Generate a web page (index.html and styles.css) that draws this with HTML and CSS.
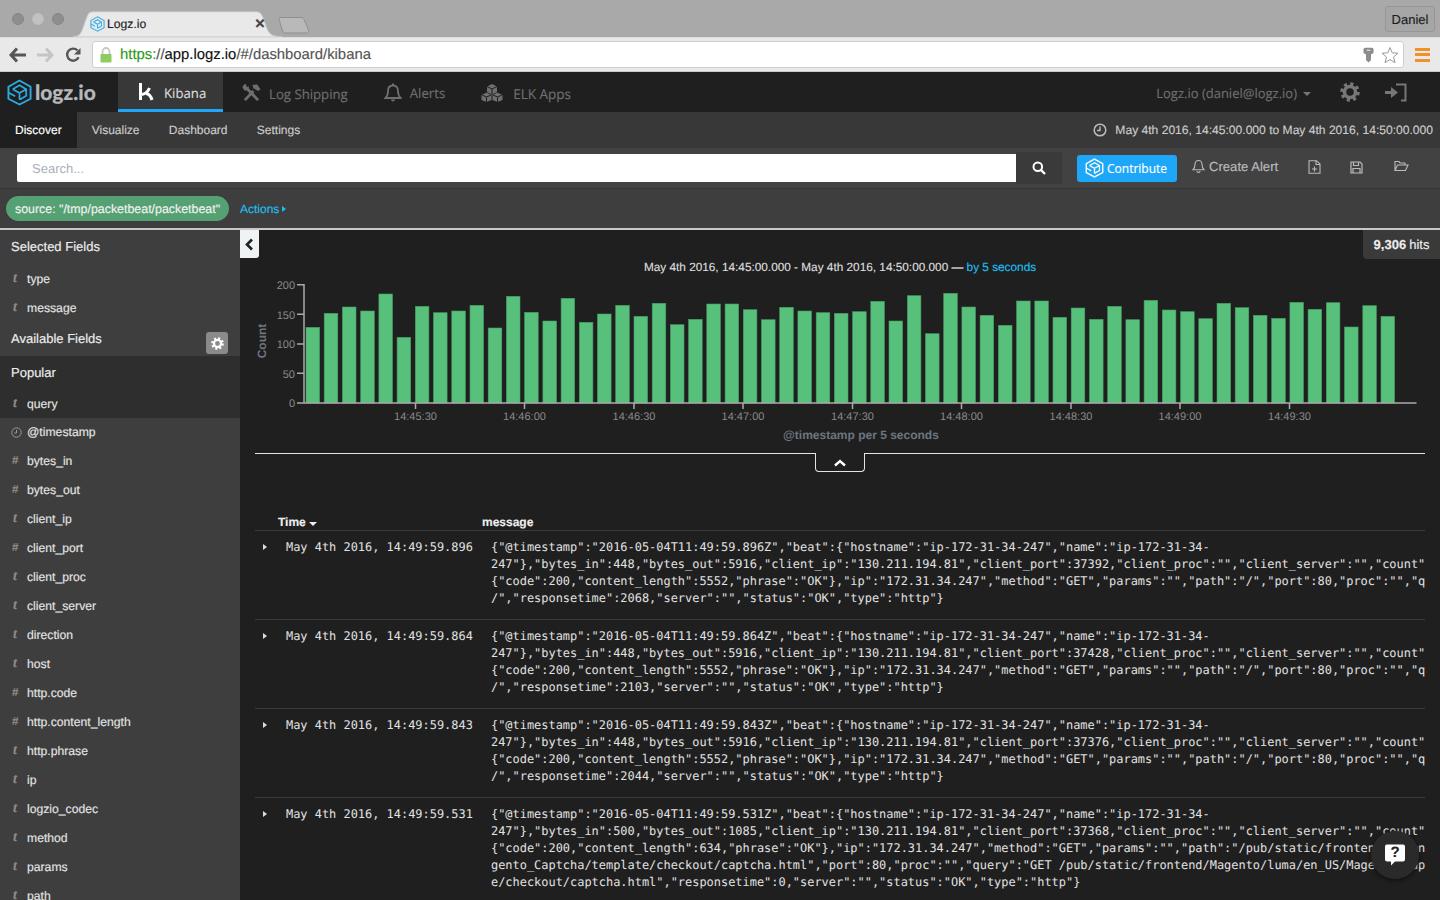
FILE: index.html
```html
<!DOCTYPE html>
<html lang="en">
<head>
<meta charset="utf-8">
<title>Logz.io</title>
<link rel="stylesheet" href="styles.css">
</head>
<body>
<svg class="defs" width="0" height="0" aria-hidden="true">
  <symbol id="logo" viewBox="0 0 26 28">
    <path d="M13 1.500 24.500 8v12.500L13 26.500 1.500 20.500V8z" fill="none" stroke="currentColor" stroke-width="2"/>
    <path d="M6 10.500 13 6.500l7 4v7l-7 4M6 10.500l7 4 7-4M13 14.500v7M1.500 14l7 4" fill="none" stroke="currentColor" stroke-width="1.800"/>
  </symbol>
</svg>

<div class="chrome-tabs">
  <div class="lights"><i class="light"></i><i class="light pale"></i><i class="light"></i></div>
  <div class="tab">
    <svg class="tab-shape" width="209" height="26" viewBox="0 0 212 26" preserveAspectRatio="none"><path d="M0 25.500C6 25.500 8 23 10 17L14 6C15.500 2 17 .7 21 .7H185C189 .7 191 2 192.500 6L197 18C199 23 202 25.500 212 25.500V26H0z" fill="#e9e9e9" stroke="#c4c4c4"/></svg>
    <svg class="favicon" width="15" height="16"><use href="#logo"/></svg>
    <span class="tab-title">Logz.io</span>
    <span class="tab-close">×</span>
  </div>
  <svg class="new-tab" width="32" height="17" viewBox="0 0 32 17"><path d="M1 1.500C1 .8 1.500.5 2.200.5H23C24.500.5 25.500 1.200 26 2.500L30.500 13C31 15 30.200 16 28.500 16H7C6 16 5.200 15.500 4.800 14.500L1 2.500z" fill="#b9b9b9" stroke="#8f8f8f"/></svg>
  <div class="profile">Daniel</div>
</div>

<div class="chrome-bar">
  <div class="nav-btns">
    <svg width="18" height="16" viewBox="0 0 18 16"><path d="M8 1.500 2 8l6 6.500M2.500 8H17" fill="none" stroke="#555" stroke-width="3"/></svg>
    <svg width="18" height="16" viewBox="0 0 18 16"><path d="M10 1.500 16 8l-6 6.500M15.500 8H1" fill="none" stroke="#c5c5c5" stroke-width="3"/></svg>
    <svg width="16" height="16" viewBox="0 0 16 16"><path d="M13.600 10.200A6 6 0 1 1 12.500 3.500" fill="none" stroke="#555" stroke-width="2.400"/><path d="M15.500 1v6.500H9z" fill="#555"/></svg>
  </div>
  <div class="omnibox">
    <svg class="lock" width="14" height="16" viewBox="0 0 14 16"><path d="M3.500 7V4.500a3.500 3.500 0 0 1 7 0V7" fill="none" stroke="#c7c7c7" stroke-width="1.800"/><rect x="1.500" y="7" width="11" height="8.500" rx="1" fill="#8fcb62"/></svg>
    <span class="url"><span class="scheme">https:</span><span class="dim">//</span><span class="host">app.logz.io</span><span class="dim">/#/dashboard/kibana</span></span>
    <svg class="key" width="11" height="16" viewBox="0 0 11 16"><path d="M2 .8h7a1.500 1.500 0 0 1 1.500 1.500V6L8 7.500V13l-2.500 2.500L3 13V7.500L.5 6V2.300A1.500 1.500 0 0 1 2 .8z" fill="#8c8c8c"/><path d="M3.500 3.300h4" stroke="#ddd" stroke-width="1.200"/></svg>
    <svg class="star" width="18" height="18" viewBox="0 0 18 18"><path d="M9 1.500 11.200 6.800 17 7.200 12.500 11 14 16.700 9 13.600 4 16.700 5.500 11 1 7.200 6.800 6.800z" fill="#fff" stroke="#9a9a9a"/></svg>
  </div>
  <div class="burger"><i></i><i></i><i></i></div>
</div>

<div class="app">
  <nav class="topnav">
    <div class="brand">
      <svg class="brand-logo" width="25" height="27"><use href="#logo"/></svg>
      <span class="wordmark">logz.io</span>
    </div>
    <a class="app-tab active">
      <svg width="16" height="19" viewBox="0 0 16 19"><path d="M2.500 1v17M2.500 12.500C8 12.500 10 9.500 11.500 6M8 11.500C11.500 12 13 14.500 14 18" fill="none" stroke="#fff" stroke-width="3"/></svg>
      <span>Kibana</span>
    </a>
    <a class="app-tab">
      <svg width="19" height="20" viewBox="0 0 20 20"><path d="M3 17.500 12 8M2 2l15 15.500" fill="none" stroke="#6f6f6f" stroke-width="3"/><path d="M.5 4.500A4.500 4.500 0 0 1 5 .5L3.500 3l1.500 1.500L7.500 3A4.500 4.500 0 0 1 3 7.500zM11 1.500l5-.5 3.500 5-2.500 2-5-3z" fill="#6f6f6f"/></svg>
      <span>Log Shipping</span>
    </a>
    <a class="app-tab alerts">
      <svg width="18" height="20" viewBox="0 0 18 20"><path d="M9 2.500C5.500 2.500 4 5 4 8c0 4-1 5.500-2.500 7h15C15 13.500 14 12 14 8c0-3-1.500-5.500-5-5.500z" fill="none" stroke="#6f6f6f" stroke-width="1.800"/><path d="M7 16.500a2 2 0 0 0 4 0zM8 .5h2v2H8z" fill="#6f6f6f"/></svg>
      <span>Alerts</span>
    </a>
    <a class="app-tab elk">
      <svg width="22" height="19" viewBox="0 0 22 19"><path d="M11 1l5 2.500V9l-5 2.500L6 9V3.500zM5.500 9.500l5 2.500v5L5.500 19 .5 17v-5zM16.500 9.500l5 2.500v5l-5 2-5-2v-5z" fill="#6f6f6f"/><path d="M6 3.500l5 2.500 5-2.500M11 6v5M1 12l4.500 2 4.500-2M5.500 14v5M12 12l4.500 2 4.500-2M16.500 14v5" fill="none" stroke="#1f1f1f"/></svg>
      <span>ELK Apps</span>
    </a>
    <div class="user">
      <span>Logz.io (daniel@logz.io)</span><i class="caret-down"></i>
      <svg class="gear" width="20" height="20" viewBox="0 0 20 20"><circle cx="10" cy="10" r="8" fill="none" stroke="#777" stroke-width="3.500" stroke-dasharray="3.140 3.140"/><circle cx="10" cy="10" r="5.500" fill="none" stroke="#777" stroke-width="3.500"/></svg>
      <svg class="signin" width="22" height="19" viewBox="0 0 22 19"><path d="M11 1.500h9.500v16H16" fill="none" stroke="#777" stroke-width="2"/><path d="M0 8h6V4l7 5.500L6 15v-4H0z" fill="#777"/></svg>
    </div>
  </nav>

  <div class="subnav">
    <a class="sub-link current">Discover</a>
    <a class="sub-link">Visualize</a>
    <a class="sub-link">Dashboard</a>
    <a class="sub-link">Settings</a>
    <div class="timepicker">
      <svg width="14" height="14" viewBox="0 0 14 14"><circle cx="7" cy="7" r="5.800" fill="none" stroke="#bbb" stroke-width="1.500"/><path d="M7 3.500V7.500H4" fill="none" stroke="#bbb" stroke-width="1.400"/></svg>
      <span>May 4th 2016, 14:45:00.000 to May 4th 2016, 14:50:00.000</span>
    </div>
  </div>

  <div class="searchbar">
    <div class="search-input">Search...</div>
    <div class="search-btn">
      <svg width="14" height="14" viewBox="0 0 14 14"><circle cx="5.800" cy="5.800" r="4.300" fill="none" stroke="#fff" stroke-width="2"/><path d="M9 9l4 4" stroke="#fff" stroke-width="2.400"/></svg>
    </div>
    <button class="contribute"><svg width="19" height="20"><use href="#logo"/></svg><span>Contribute</span></button>
    <a class="create-alert">
      <svg width="13" height="14" viewBox="0 0 13 14"><path d="M6.500 1.500C4 1.500 3 3.500 3 5.500c0 3-.8 4-2 5.200h11c-1.200-1.200-2-2.200-2-5.200 0-2-1-4-3.500-4zM5 12a1.500 1.500 0 0 0 3 0" fill="none" stroke="#bbb" stroke-width="1.100"/></svg>
      <span>Create Alert</span>
    </a>
    <svg class="tool new-file" width="13" height="14" viewBox="0 0 13 14"><path d="M1 .7h7.500L12 4v9.300H1zM8 .7V4.500h4M6.500 6.500v5M4 9h5" fill="none" stroke="#bbb" stroke-width="1.100"/></svg>
    <svg class="tool save" width="13" height="13" viewBox="0 0 13 13"><path d="M1 1h9l2 2v9H1zM3.500 1v3.500h5V1M3 12V7.500h7V12" fill="none" stroke="#bbb" stroke-width="1.200"/></svg>
    <svg class="tool open" width="15" height="12" viewBox="0 0 15 12"><path d="M1 10.500V1.500h4l1 1.500h5v1.500M1 10.500h10.500L14 5H3.500z" fill="none" stroke="#bbb" stroke-width="1.100"/></svg>
  </div>

  <div class="filterbar">
    <span class="pill">source: "/tmp/packetbeat/packetbeat"</span>
    <a class="actions">Actions<i class="caret-right"></i></a>
  </div>

  <div class="workspace">
    <aside class="sidebar">
      <div class="side-head first">Selected Fields</div>
      <div class="field"><i class="ftype">t</i>type</div>
      <div class="field"><i class="ftype">t</i>message</div>
      <div class="side-head avail">Available Fields
        <span class="side-gear"><svg width="13" height="13" viewBox="0 0 20 20"><circle cx="10" cy="10" r="8" fill="none" stroke="#fff" stroke-width="3.500" stroke-dasharray="3.140 3.140"/><circle cx="10" cy="10" r="5.500" fill="none" stroke="#fff" stroke-width="3.500"/></svg></span>
      </div>
      <div class="popular">
        <div class="side-head pop">Popular</div>
        <div class="field"><i class="ftype">t</i>query</div>
      </div>
      <div class="field"><svg class="fclock" width="11" height="11" viewBox="0 0 11 11"><circle cx="5.500" cy="5.500" r="4.700" fill="none" stroke="#999" stroke-width="1"/><path d="M5.500 2.800V6H3.300" fill="none" stroke="#999"/></svg>@timestamp</div>
      <div class="field"><i class="ftype num">#</i>bytes_in</div>
      <div class="field"><i class="ftype num">#</i>bytes_out</div>
      <div class="field"><i class="ftype">t</i>client_ip</div>
      <div class="field"><i class="ftype num">#</i>client_port</div>
      <div class="field"><i class="ftype">t</i>client_proc</div>
      <div class="field"><i class="ftype">t</i>client_server</div>
      <div class="field"><i class="ftype">t</i>direction</div>
      <div class="field"><i class="ftype">t</i>host</div>
      <div class="field"><i class="ftype num">#</i>http.code</div>
      <div class="field"><i class="ftype num">#</i>http.content_length</div>
      <div class="field"><i class="ftype">t</i>http.phrase</div>
      <div class="field"><i class="ftype">t</i>ip</div>
      <div class="field"><i class="ftype">t</i>logzio_codec</div>
      <div class="field"><i class="ftype">t</i>method</div>
      <div class="field"><i class="ftype">t</i>params</div>
      <div class="field"><i class="ftype">t</i>path</div>
    </aside>

    <main class="results">
      <div class="collapse-side"><svg width="9" height="13" viewBox="0 0 9 13"><path d="M7 1.500 2 6.500l5 5" fill="none" stroke="#222" stroke-width="2.600"/></svg></div>
      <div class="hits"><b>9,306</b> hits</div>

      <div class="chart-title">May 4th 2016, 14:45:00.000 - May 4th 2016, 14:50:00.000 — <a>by 5 seconds</a></div>

      <svg class="chart" width="1200" height="170" viewBox="240 275 1200 170">
        <g class="bars">
          <rect x="306" y="327.300" width="13.600" height="75.700"/><rect x="324.200" y="313.300" width="13.600" height="89.700"/><rect x="342.400" y="307" width="13.600" height="96"/><rect x="360.700" y="311" width="13.600" height="92"/><rect x="378.900" y="294" width="13.600" height="109"/><rect x="397.100" y="337.300" width="13.600" height="65.700"/>
          <rect x="415.300" y="306.300" width="13.600" height="96.700"/><rect x="433.500" y="312.700" width="13.600" height="90.300"/><rect x="451.800" y="311" width="13.600" height="92"/><rect x="470" y="305.300" width="13.600" height="97.700"/><rect x="488.200" y="328" width="13.600" height="75"/><rect x="506.400" y="296.300" width="13.600" height="106.700"/>
          <rect x="524.600" y="312.300" width="13.600" height="90.700"/><rect x="542.900" y="321" width="13.600" height="82"/><rect x="561.100" y="298.300" width="13.600" height="104.700"/><rect x="579.300" y="322.300" width="13.600" height="80.700"/><rect x="597.500" y="314" width="13.600" height="89"/><rect x="615.700" y="305.300" width="13.600" height="97.700"/>
          <rect x="634" y="316.300" width="13.600" height="86.700"/><rect x="652.200" y="303.300" width="13.600" height="99.700"/><rect x="670.400" y="324.700" width="13.600" height="78.300"/><rect x="688.600" y="319.300" width="13.600" height="83.700"/><rect x="706.800" y="304" width="13.600" height="99"/><rect x="725.100" y="304" width="13.600" height="99"/>
          <rect x="743.300" y="309.700" width="13.600" height="93.300"/><rect x="761.500" y="319.700" width="13.600" height="83.300"/><rect x="779.700" y="307.300" width="13.600" height="95.700"/><rect x="797.900" y="311" width="13.600" height="92"/><rect x="816.200" y="312.700" width="13.600" height="90.300"/><rect x="834.400" y="313.300" width="13.600" height="89.700"/>
          <rect x="852.600" y="311.700" width="13.600" height="91.300"/><rect x="870.800" y="301.300" width="13.600" height="101.700"/><rect x="889" y="321" width="13.600" height="82"/><rect x="907.300" y="295.700" width="13.600" height="107.300"/><rect x="925.500" y="333.700" width="13.600" height="69.300"/><rect x="943.700" y="293.300" width="13.600" height="109.700"/>
          <rect x="961.900" y="307" width="13.600" height="96"/><rect x="980.100" y="315.300" width="13.600" height="87.700"/><rect x="998.400" y="325.300" width="13.600" height="77.700"/><rect x="1016.600" y="301" width="13.600" height="102"/><rect x="1034.800" y="301" width="13.600" height="102"/><rect x="1053" y="317.300" width="13.600" height="85.700"/>
          <rect x="1071.200" y="308" width="13.600" height="95"/><rect x="1089.500" y="319.300" width="13.600" height="83.700"/><rect x="1107.700" y="306.300" width="13.600" height="96.700"/><rect x="1125.900" y="319.700" width="13.600" height="83.300"/><rect x="1144.100" y="300.300" width="13.600" height="102.700"/><rect x="1162.300" y="310" width="13.600" height="93"/>
          <rect x="1180.600" y="311.700" width="13.600" height="91.300"/><rect x="1198.800" y="318.700" width="13.600" height="84.300"/><rect x="1217" y="303.300" width="13.600" height="99.700"/><rect x="1235.200" y="307.700" width="13.600" height="95.300"/><rect x="1253.400" y="315.300" width="13.600" height="87.700"/><rect x="1271.700" y="318.300" width="13.600" height="84.700"/>
          <rect x="1289.900" y="302.300" width="13.600" height="100.700"/><rect x="1308.100" y="309.300" width="13.600" height="93.700"/><rect x="1326.300" y="302.700" width="13.600" height="100.300"/><rect x="1344.500" y="327" width="13.600" height="76"/><rect x="1362.800" y="305.700" width="13.600" height="97.300"/><rect x="1381" y="316.300" width="13.600" height="86.700"/>
        </g>
        <path class="axis" d="M297 284.800H304V403M297 314.300H304M297 344H304M297 373.300H304M297 403H1416.500M415.500 403V409M524.500 403V409M634 403V409M743 403V409M852.500 403V409M961.500 403V409M1071 403V409M1180 403V409M1289.500 403V409"/>
        <g class="tick-y">
          <text x="295" y="289">200</text><text x="295" y="318.500">150</text><text x="295" y="348">100</text><text x="295" y="377.500">50</text><text x="295" y="407">0</text>
        </g>
        <g class="tick-x">
          <text x="415.500" y="420">14:45:30</text><text x="524.500" y="420">14:46:00</text><text x="634" y="420">14:46:30</text><text x="743" y="420">14:47:00</text><text x="852.500" y="420">14:47:30</text><text x="961.500" y="420">14:48:00</text><text x="1071" y="420">14:48:30</text><text x="1180" y="420">14:49:00</text><text x="1289.500" y="420">14:49:30</text>
        </g>
        <text class="axis-title" x="861" y="439">@timestamp per 5 seconds</text>
        <text class="axis-title" transform="translate(266 341) rotate(-90)">Count</text>
      </svg>

      <div class="divider">
        <span class="rule"></span>
        <span class="toggle"><svg width="12" height="8" viewBox="0 0 12 8"><path d="M1 6.500 6 2l5 4.500" fill="none" stroke="#fff" stroke-width="2.400"/></svg></span>
        <span class="rule"></span>
      </div>

      <div class="doc-table">
        <div class="doc-head"><b class="th-time">Time<i class="caret-down small"></i></b><b class="th-msg">message</b></div>

        <div class="doc-row">
          <i class="caret-right row-caret"></i>
          <div class="doc-time">May 4th 2016, 14:49:59.896</div>
          <div class="doc-msg">
            <div>{"@timestamp":"2016-05-04T11:49:59.896Z","beat":{"hostname":"ip-172-31-34-247","name":"ip-172-31-34-</div>
            <div>247"},"bytes_in":448,"bytes_out":5916,"client_ip":"130.211.194.81","client_port":37392,"client_proc":"","client_server":"","count":1,"http":</div>
            <div>{"code":200,"content_length":5552,"phrase":"OK"},"ip":"172.31.34.247","method":"GET","params":"","path":"/","port":80,"proc":"","query":"GET</div>
            <div>/","responsetime":2068,"server":"","status":"OK","type":"http"}</div>
          </div>
        </div>

        <div class="doc-row">
          <i class="caret-right row-caret"></i>
          <div class="doc-time">May 4th 2016, 14:49:59.864</div>
          <div class="doc-msg">
            <div>{"@timestamp":"2016-05-04T11:49:59.864Z","beat":{"hostname":"ip-172-31-34-247","name":"ip-172-31-34-</div>
            <div>247"},"bytes_in":448,"bytes_out":5916,"client_ip":"130.211.194.81","client_port":37428,"client_proc":"","client_server":"","count":1,"http":</div>
            <div>{"code":200,"content_length":5552,"phrase":"OK"},"ip":"172.31.34.247","method":"GET","params":"","path":"/","port":80,"proc":"","query":"GET</div>
            <div>/","responsetime":2103,"server":"","status":"OK","type":"http"}</div>
          </div>
        </div>

        <div class="doc-row">
          <i class="caret-right row-caret"></i>
          <div class="doc-time">May 4th 2016, 14:49:59.843</div>
          <div class="doc-msg">
            <div>{"@timestamp":"2016-05-04T11:49:59.843Z","beat":{"hostname":"ip-172-31-34-247","name":"ip-172-31-34-</div>
            <div>247"},"bytes_in":448,"bytes_out":5916,"client_ip":"130.211.194.81","client_port":37376,"client_proc":"","client_server":"","count":1,"http":</div>
            <div>{"code":200,"content_length":5552,"phrase":"OK"},"ip":"172.31.34.247","method":"GET","params":"","path":"/","port":80,"proc":"","query":"GET</div>
            <div>/","responsetime":2044,"server":"","status":"OK","type":"http"}</div>
          </div>
        </div>

        <div class="doc-row">
          <i class="caret-right row-caret"></i>
          <div class="doc-time">May 4th 2016, 14:49:59.531</div>
          <div class="doc-msg">
            <div>{"@timestamp":"2016-05-04T11:49:59.531Z","beat":{"hostname":"ip-172-31-34-247","name":"ip-172-31-34-</div>
            <div>247"},"bytes_in":500,"bytes_out":1085,"client_ip":"130.211.194.81","client_port":37368,"client_proc":"","client_server":"","count":1,"http":</div>
            <div>{"code":200,"content_length":634,"phrase":"OK"},"ip":"172.31.34.247","method":"GET","params":"","path":"/pub/static/frontend/Magento/luma/en_US/Ma</div>
            <div>gento_Captcha/template/checkout/captcha.html","port":80,"proc":"","query":"GET /pub/static/frontend/Magento/luma/en_US/Magento_Captcha/templat</div>
            <div>e/checkout/captcha.html","responsetime":0,"server":"","status":"OK","type":"http"}</div>
          </div>
        </div>
      </div>

      <div class="help-bubble">
        <svg width="22" height="24" viewBox="0 0 22 24"><path d="M3 1.500h16A2 2 0 0 1 21 3.500v13a2 2 0 0 1-2 2H11l-4 4v-4H3a2 2 0 0 1-2-2v-13a2 2 0 0 1 2-2z" fill="#fff"/></svg>
        <span class="help-mark">?</span>
      </div>
    </main>
  </div>
</div>
</body>
</html>
```

FILE: styles.css
```css
* { box-sizing: border-box; }
html, body { margin: 0; height: 900px; overflow: hidden; }
body { font-family: "Liberation Sans", Arial, sans-serif; font-size: 12px; background: #1f1f1f; color: #ddd; text-rendering: geometricPrecision; -webkit-text-stroke: .15px; }
i { font-style: normal; }
a { cursor: pointer; }
.defs { position: absolute; }

/* browser chrome */
.chrome-tabs { height: 37px; background: #a9a9a9; display: flex; align-items: flex-end; padding-left: 12px; position: relative; }
.lights { display: flex; gap: 8px; align-self: flex-start; margin-top: 13px; width: 63px; }
.light { width: 12px; height: 12px; border-radius: 50%; background: #8e8e8e; border: 1px solid #858585; }
.light.pale { background: #c2c2c2; border-color: #bcbcbc; }
.tab { width: 209px; height: 26px; position: relative; display: flex; align-items: center; padding: 0 0 0 17px; margin-left: -2px; }
.tab-shape { position: absolute; left: 0; top: 0; }
.favicon { position: relative; color: #3cb0e6; margin-right: 2px; }
.tab-title { position: relative; color: #222; font-size: 12.200px; }
.tab-close { position: absolute; left: 182px; top: 3px; color: #444; font-size: 17px; font-weight: bold; }
.new-tab { margin: 0 0 3px -4px; }
.profile { margin-left: auto; margin-right: 5px; align-self: flex-start; margin-top: 6px; width: 50px; height: 26px; background: #a6a6a6; border: 1px solid #979797; border-radius: 3px; display: flex; align-items: center; justify-content: center; color: #1e1e1e; font-size: 13px; }

.chrome-bar { height: 35px; background: #e9e9e9; border-top: 1px solid #dcdcdc; border-bottom: 1px solid #c9c9c9; display: flex; align-items: center; padding-left: 9px; }
.nav-btns { display: flex; align-items: center; gap: 9px; width: 83px; }
.nav-btns svg:last-child { margin-left: 2px; }
.omnibox { width: 1312px; height: 27px; background: #fff; border: 1px solid #cfcfcf; border-radius: 3px; display: flex; align-items: center; padding-left: 6px; }
.lock { margin-right: 7px; }
.url { font-size: 14.850px; color: #222; font-family: "Liberation Sans", sans-serif; }
.scheme { color: #2d9b16; }
.dim { color: #555; }
.host { color: #111; }
.key { margin-left: auto; margin-right: 7px; }
.star { margin-right: 4px; }
.burger { margin-left: 11px; width: 15px; display: flex; flex-direction: column; gap: 2.500px; }
.burger i { height: 3px; background: #f0912a; }

/* app nav */
.app { height: 828px; display: flex; flex-direction: column; }
.topnav { height: 40px; flex: none; background: #1f1f1f; display: flex; font-family: "Open Sans", sans-serif; font-size: 13.200px; color: #6f6f6f; }
.brand { width: 118px; flex: none; display: flex; align-items: center; padding-left: 7px; gap: 3px; }
.brand-logo { color: #2eaadf; flex: none; }
.wordmark { font-family: "Lato", sans-serif; font-weight: 900; font-size: 21px; color: #b4b8bc; position: relative; top: 0; }
.app-tab { display: flex; align-items: center; gap: 8px; height: 40px; padding: 3px 17px 0 19px; flex: none; }
.app-tab svg { flex: none; position: relative; top: -1px; }
.app-tab.active { width: 105px; padding: 4px 0 0 20px; gap: 10px; background: #383838; border-bottom: 3px solid #1ea7f9; color: #ddd; }
.app-tab.alerts span { position: relative; top: -1px; }
.app-tab.elk { gap: 10px; font-size: 13.500px; }
.user { margin-left: auto; display: flex; align-items: center; padding-right: 33px; font-size: 13px; padding-top: 2px; }
.user svg { position: relative; top: -1px; }
.caret-down { display: inline-block; width: 0; height: 0; border-left: 4px solid transparent; border-right: 4px solid transparent; border-top: 4px solid #777; margin-left: 6px; position: relative; top: 1px; }
.gear { margin-left: 29px; }
.signin { margin-left: 25px; }

.subnav { height: 36px; flex: none; background: #383838; display: flex; align-items: stretch; color: #ccc; }
.sub-link { display: flex; align-items: center; padding: 0 15px; }
.sub-link + .sub-link + .sub-link { margin-left: -.7px; }
.sub-link.current { background: #1f1f1f; color: #fff; }
.timepicker { margin-left: auto; display: flex; align-items: center; gap: 8px; padding-right: 7px; color: #ccc; font-size: 12.080px; }

.searchbar { height: 41px; flex: none; background: #424242; border-bottom: 1px solid #363636; display: flex; align-items: center; padding-left: 17px; color: #bbb; }
.search-input { width: 999px; height: 28px; background: #fff; border-radius: 2px 0 0 2px; color: #a9b0ba; font-size: 13px; padding-left: 15px; display: flex; align-items: center; -webkit-text-stroke: 0; }
.search-btn { width: 46px; height: 32px; background: #3a3a3a; display: flex; align-items: center; justify-content: center; }
.contribute { margin-left: 15px; width: 100px; height: 27px; flex: none; background: #1ea7f9; border: 0; border-radius: 3px; color: #fff; font-family: "Open Sans", sans-serif; font-size: 12px; display: flex; align-items: center; padding: 0 0 0 8px; gap: 3px; }
.create-alert { margin-left: 15px; display: flex; align-items: center; gap: 4px; font-size: 13.100px; color: #bbb; position: relative; top: -2px; }
.tool { margin-left: 30px; position: relative; top: -1px; }
.tool.save { margin-left: 29px; }
.tool.open { margin-left: 31px; top: -2px; }

.filterbar { height: 41px; flex: none; background: #3e3e3e; border-bottom: 2px solid #c8c8c8; display: flex; align-items: center; padding-left: 6px; }
.pill { height: 25px; width: 223px; background: #56a173; border-radius: 13px; color: #f2f2f2; display: flex; align-items: center; justify-content: center; white-space: nowrap; font-size: 12.400px; }
.actions { margin-left: 11px; color: #1dbff0; display: flex; align-items: center; gap: 3px; }
.caret-right { display: inline-block; width: 0; height: 0; border-top: 3.500px solid transparent; border-bottom: 3.500px solid transparent; border-left: 4px solid #1dbff0; }

/* sidebar */
.workspace { flex: 1; min-height: 0; display: flex; overflow: hidden; }
.sidebar { width: 240px; flex: none; background: #3e3e3e; color: #e6e6e6; overflow: hidden; }
.side-head { height: 34px; display: flex; align-items: center; justify-content: space-between; padding: 0 12px 0 11px; font-size: 13px; color: #eee; }
.side-head.first { padding-bottom: 2px; }
.side-head.avail { padding-bottom: 2px; }
.side-head.pop { height: 33px; padding-bottom: 1px; }
.side-gear { width: 22px; height: 22px; background: #8a8a8a; border-radius: 3px; display: flex; align-items: center; justify-content: center; align-self: flex-end; position: relative; top: 0; }
.popular { background: #2e2e2e; }
.popular + .field { height: 28px; }
.field { height: 29px; display: flex; align-items: center; padding-left: 11px; font-size: 12.200px; color: #e4e4e4; }
.ftype { width: 16px; font-family: "Liberation Serif", serif; font-style: italic; font-weight: bold; font-size: 14px; color: #8c8c8c; padding-left: 2px; }
.ftype.num { font-family: "Liberation Sans", sans-serif; font-style: normal; font-size: 11.500px; padding-left: 1px; }
.fclock { margin-right: 5px; }

/* results */
.results { flex: 1; min-width: 0; position: relative; background: #1f1f1f; overflow: hidden; }
.collapse-side { position: absolute; left: 0; top: 0; width: 19px; height: 28px; background: #f0f3f4; border-radius: 0 0 3px 0; display: flex; align-items: center; justify-content: center; }
.hits { position: absolute; right: 0; top: 0; width: 77px; height: 29px; background: #3a3a3a; border-radius: 0 0 0 4px; display: flex; align-items: center; justify-content: center; gap: 3px; color: #eee; font-size: 13px; }
.chart-title { padding-top: 29px; line-height: 16px; height: 45px; text-align: center; color: #ddd; font-size: 11.800px; }
.chart-title a { color: #1dbff0; }
.chart { display: block; font-family: "Liberation Sans", sans-serif; }
.bars rect { fill: #57c17b; stroke: #479c65; stroke-width: .6; }
.axis { fill: none; stroke: #aaa; stroke-width: 1.500; }
.tick-y text { font-size: 11px; fill: #8a8a8a; text-anchor: end; }
.tick-x text { font-size: 11px; fill: #8a8a8a; text-anchor: middle; }
.axis-title { font-size: 12px; font-weight: bold; fill: #6c7680; text-anchor: middle; }

.divider { margin: 8px 15px 0; display: flex; align-items: flex-start; height: 19px; }
.rule { flex: 1; border-top: 1.500px solid #e3e3e3; }
.toggle { width: 50px; height: 19px; border: 1.500px solid #e3e3e3; border-top: 0; border-radius: 0 0 4px 4px; display: flex; align-items: center; justify-content: center; padding-top: 1px; }

.doc-table { margin: 41px 15px 0; }
.doc-head { height: 18px; border-bottom: 1px solid #3a3a3a; display: flex; align-items: center; font-size: 12px; color: #eee; }
.th-time { margin-left: 23px; width: 204px; display: flex; align-items: center; }
.caret-down.small { border-top-color: #eee; margin-left: 3px; top: 2px; }
.doc-row { height: 89px; border-bottom: 1px solid #3a3a3a; display: grid; grid-template-columns: 31px 205px 1fr; padding-top: 8px; font-family: "DejaVu Sans Mono", "Liberation Mono", monospace; font-size: 11.950px; line-height: 17px; color: #e2e2e2; -webkit-text-stroke: 0; }
.doc-row:last-child { height: 112px; }
.row-caret { border-left-color: #ddd; margin: 5px 0 0 8px; }
.doc-time { white-space: nowrap; }
.doc-msg { overflow: hidden; min-width: 0; }
.doc-msg div { white-space: pre; }

.help-bubble { position: absolute; left: 1131px; top: 601px; width: 48px; height: 48px; border-radius: 50%; background: #2a2a2a; box-shadow: 0 1px 5px rgba(0,0,0,.6); display: flex; align-items: center; justify-content: center; }
.help-mark { position: absolute; left: 0; right: 0; top: 12px; text-align: center; color: #222; font: bold 15px/20px "Liberation Sans", sans-serif; }
```
